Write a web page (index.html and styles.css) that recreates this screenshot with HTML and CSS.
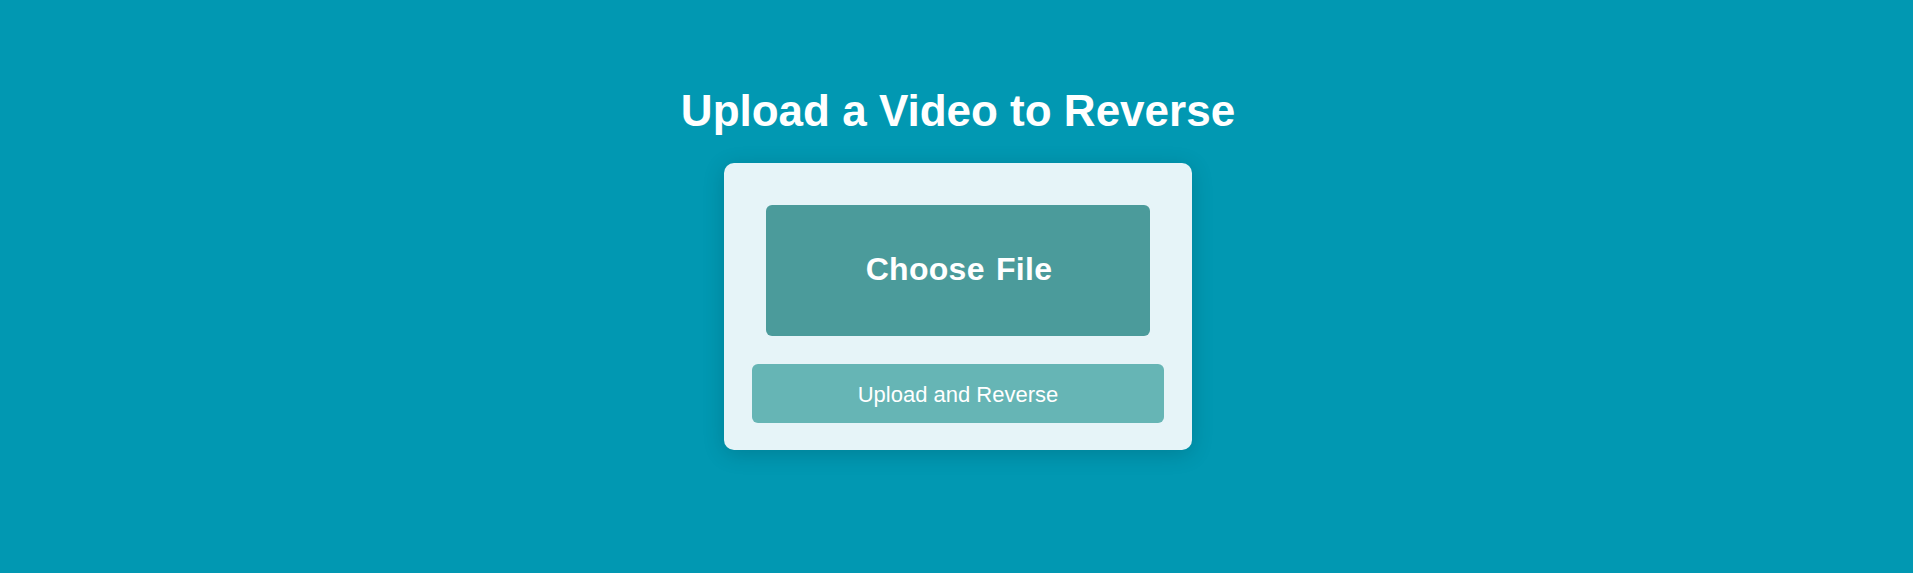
FILE: index.html
```html
<!DOCTYPE html>
<html lang="en">
<head>
<meta charset="utf-8">
<title>Upload a Video to Reverse</title>
<link rel="stylesheet" href="styles.css">
</head>
<body>
<main class="page">
  <h1 class="title">Upload a Video to Reverse</h1>
  <form class="card">
    <label class="choose">
      <input class="file-input" type="file" accept="video/*">
      <span class="choose-text">Choose File</span>
    </label>
    <button class="submit" type="button">Upload and Reverse</button>
  </form>
</main>
</body>
</html>
```
FILE: styles.css
```css
html, body {
  margin: 0;
  padding: 0;
}
body {
  background: #0198b2;
  font-family: "Liberation Sans", Arial, sans-serif;
  height: 573px;
  overflow: hidden;
}
.page {
  display: flex;
  flex-direction: column;
  align-items: center;
  padding-top: 85px;
  padding-left: 3px;
}
.title {
  margin: 0 0 27px;
  font-size: 44px;
  line-height: 51px;
  font-weight: bold;
  color: #ffffff;
}
.card {
  box-sizing: border-box;
  width: 468px;
  padding: 28px 28px 27px;
  background: #e6f4f8;
  border-radius: 10px;
  box-shadow: 0 4px 22px rgba(0, 0, 0, 0.16);
  display: flex;
  flex-direction: column;
}
.choose {
  margin: 14px 14px 28px;
  height: 131px;
  background: #4b9b9b;
  border-radius: 6px;
  display: flex;
  align-items: center;
  justify-content: center;
  padding-bottom: 2px;
  box-sizing: border-box;
  cursor: pointer;
}
.file-input {
  display: none;
}
.choose-text {
  color: #ffffff;
  font-size: 32px;
  font-weight: bold;
  letter-spacing: 0.3px;
  word-spacing: 2px;
  padding-left: 2px;
}
.submit {
  height: 59px;
  border: none;
  border-radius: 6px;
  background: #66b5b5;
  color: #ffffff;
  font-family: "Liberation Sans", Arial, sans-serif;
  font-size: 22px;
  padding: 2px 0 0;
  cursor: pointer;
}
```
